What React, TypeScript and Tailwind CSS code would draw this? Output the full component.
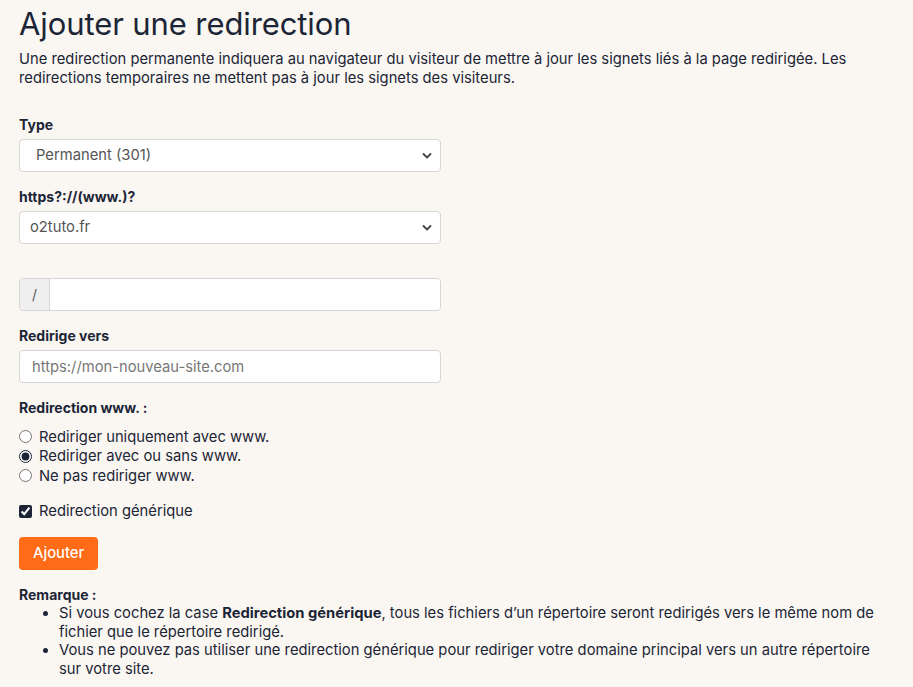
import React from "react";

const Chevron = () => (
  <svg className="pointer-events-none absolute right-[9px] top-1/2 -translate-y-1/2" width="10" height="7" viewBox="0 0 10 7" fill="none">
    <path d="M1.5 1.5 L5 5 L8.5 1.5" stroke="#444" strokeWidth="1.8" strokeLinecap="round" strokeLinejoin="round" />
  </svg>
);

export default function App() {
  return (
    <div className="min-h-[687px] w-full bg-[#faf7f2] text-[#1c2536] px-[19px] pt-[4px]" style={{ fontFamily: "Inter, 'Noto Sans', sans-serif" }}>
      <h1 className="text-[31px] leading-[40px] font-normal tracking-[-0.1px]">Ajouter une redirection</h1>
      <p className="mt-[6px] text-[14.75px] leading-[19px] pr-[40px]">
        Une redirection permanente indiquera au navigateur du visiteur de mettre à jour les signets liés à la page redirigée. Les redirections temporaires ne mettent pas à jour les signets des visiteurs.
      </p>

      <div className="mt-[28px] w-[422px]">
        <label className="block text-[14px] leading-[18px] font-bold">Type</label>
        <div className="relative mt-[5px]">
          <select className="block w-full h-[33px] appearance-none rounded-[4px] border border-[#d6d6d6] bg-white pl-[16px] text-[14.75px] text-[#555] outline-none" defaultValue="301">
            <option value="301">Permanent (301)</option>
            <option value="302">Temporaire (302)</option>
          </select>
          <Chevron />
        </div>

        <label className="mt-[16px] block text-[14px] leading-[18px] font-bold">https?://(www.)?</label>
        <div className="relative mt-[5px]">
          <select className="block w-full h-[33px] appearance-none rounded-[4px] border border-[#d6d6d6] bg-white pl-[10px] text-[14.75px] text-[#555] outline-none" defaultValue="o2tuto.fr">
            <option value="o2tuto.fr">o2tuto.fr</option>
          </select>
          <Chevron />
        </div>

        <div className="mt-[16px] h-[13px]" />
        <div className="mt-[5px] flex h-[33px] rounded-[4px] border border-[#d6d6d6] bg-white overflow-hidden">
          <span className="flex w-[30px] items-center justify-center border-r border-[#d6d6d6] bg-[#efefef] text-[14px] text-[#555]">/</span>
          <input className="flex-1 px-[10px] text-[14.75px] outline-none bg-white" />
        </div>

        <label className="mt-[16px] block text-[14px] leading-[18px] font-bold">Redirige vers</label>
        <input
          className="mt-[5px] block w-full h-[33px] rounded-[4px] border border-[#d6d6d6] bg-white px-[12px] text-[14.75px] outline-none placeholder:text-[#777]"
          placeholder="https://mon-nouveau-site.com"
        />

        <label className="mt-[16px] block text-[14px] leading-[18px] font-bold">Redirection www. :</label>
        <div className="mt-[10px] flex flex-col text-[14.75px]">
          <label className="flex h-[19.5px] items-center gap-[7px]">
            <input type="radio" name="www" className="m-0 h-[13px] w-[13px] accent-[#1c2536]" />
            Rediriger uniquement avec www.
          </label>
          <label className="flex h-[19.5px] items-center gap-[7px]">
            <input type="radio" name="www" defaultChecked className="m-0 h-[13px] w-[13px] accent-[#1c2536]" />
            Rediriger avec ou sans www.
          </label>
          <label className="flex h-[19.5px] items-center gap-[7px]">
            <input type="radio" name="www" className="m-0 h-[13px] w-[13px] accent-[#1c2536]" />
            Ne pas rediriger www.
          </label>
        </div>

        <label className="mt-[16px] flex h-[20px] items-center gap-[7px] text-[14.75px]">
          <input type="checkbox" defaultChecked className="m-0 h-[13px] w-[13px] accent-[#1c2536]" />
          Redirection générique
        </label>

        <button className="mt-[15px] h-[33px] rounded-[4px] bg-[#ff6b17] px-[14px] text-[14.75px] font-medium text-white">Ajouter</button>
      </div>

      <div className="mt-[16px] text-[14.75px] leading-[18.5px]">
        <div className="font-bold text-[14px]">Remarque :</div>
        <ul className="list-disc pl-[40px] pr-[19px]">
          <li>
            Si vous cochez la case <b>Redirection générique</b>, tous les fichiers d’un répertoire seront redirigés vers le même nom de fichier que le répertoire redirigé.
          </li>
          <li>
            Vous ne pouvez pas utiliser une redirection générique pour rediriger votre domaine principal vers un autre répertoire sur votre site.
          </li>
        </ul>
      </div>
    </div>
  );
}
